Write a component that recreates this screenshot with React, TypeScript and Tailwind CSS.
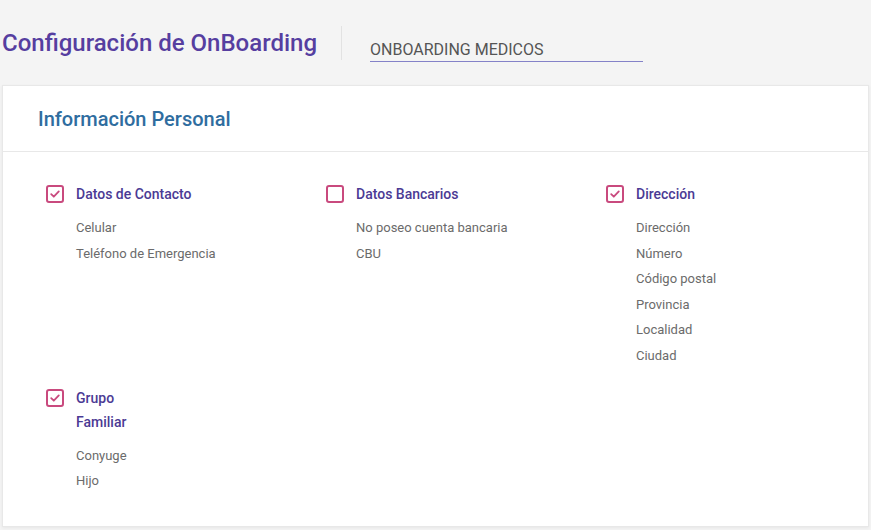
import React from "react";

type Seccion = {
  titulo: string;
  marcado: boolean;
  items: string[];
  estrecho?: boolean;
};

const FILA_1: Seccion[] = [
  { titulo: "Datos de Contacto", marcado: true, items: ["Celular", "Teléfono de Emergencia"] },
  { titulo: "Datos Bancarios", marcado: false, items: ["No poseo cuenta bancaria", "CBU"] },
  {
    titulo: "Dirección",
    marcado: true,
    items: ["Dirección", "Número", "Código postal", "Provincia", "Localidad", "Ciudad"],
  },
];

const FILA_2: Seccion[] = [
  { titulo: "Grupo Familiar", marcado: true, items: ["Conyuge", "Hijo"], estrecho: true },
];

function Casilla({ marcado }: { marcado: boolean }) {
  return (
    <span className="mt-[3px] flex h-[18px] w-[18px] shrink-0 items-center justify-center rounded-[3px] border-2 border-[#c94a7e] bg-white">
      {marcado && (
        <svg width="12" height="12" viewBox="0 0 12 12" fill="none" aria-hidden>
          <path
            d="M2.2 6.2 L4.8 8.7 L9.8 3.4"
            stroke="#c94a7e"
            strokeWidth="1.8"
            strokeLinecap="round"
            strokeLinejoin="round"
          />
        </svg>
      )}
    </span>
  );
}

function Bloque({ s }: { s: Seccion }) {
  return (
    <div className="w-[280px] shrink-0">
      <div className="flex items-start gap-[12px]">
        <Casilla marcado={s.marcado} />
        <div>
          <p
            className={`text-[14px] font-medium leading-[24px] text-[#4b3a94] ${
              s.estrecho ? "w-[60px]" : ""
            }`}
          >
            {s.titulo}
          </p>
          <ul className="mt-[9px]">
            {s.items.map((it) => (
              <li key={it} className="text-[13px] leading-[25.6px] text-[#6b6b6b]">
                {it}
              </li>
            ))}
          </ul>
        </div>
      </div>
    </div>
  );
}

export default function App() {
  return (
    <div
      className="min-h-[530px] bg-[#f4f4f4] px-[2px]"
      style={{ fontFamily: "Roboto, 'Noto Sans', sans-serif" }}
    >
      <header className="flex h-[85px] items-center">
        <h1 className="text-[24px] font-medium leading-none text-[#563ea0]">
          Configuración de OnBoarding
        </h1>
        <div className="ml-[24px] h-[34px] w-px bg-[#e2e2e2]" />
        <div className="ml-[28px] mt-[15px] w-[273px] border-b border-[#8482c8] text-[16px] leading-[23px] text-[#555555]">
          ONBOARDING MEDICOS
        </div>
      </header>

      <section className="h-[442px] overflow-hidden border border-[#e8e8e8] bg-white shadow-[0_1px_3px_rgba(0,0,0,0.06)]">
        <div className="flex h-[66px] items-center border-b border-[#e8e8e8] px-[35px]">
          <h2 className="text-[20px] font-medium text-[#2f6d9f]">Información Personal</h2>
        </div>
        <div className="flex flex-col gap-[17px] px-[43px] pt-[30px]">
          <div className="flex">
            {FILA_1.map((s) => (
              <Bloque key={s.titulo} s={s} />
            ))}
          </div>
          <div className="flex">
            {FILA_2.map((s) => (
              <Bloque key={s.titulo} s={s} />
            ))}
          </div>
        </div>
      </section>
    </div>
  );
}
